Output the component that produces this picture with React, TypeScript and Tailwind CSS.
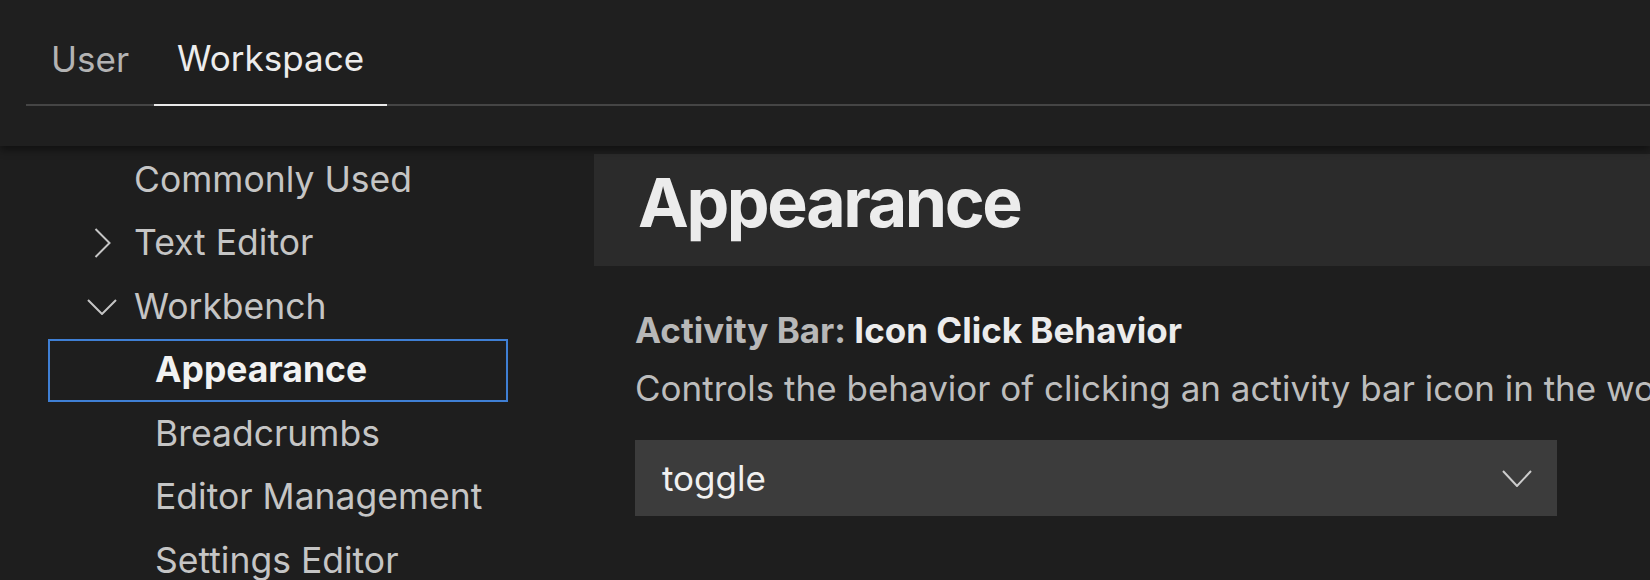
import { ReactNode } from "react";

const font = { fontFamily: "Inter, 'Noto Sans', sans-serif" };

function ChevronRight() {
  return (
    <svg width="17" height="30" viewBox="0 0 17 30" fill="none">
      <polyline points="1.5,1 15.5,15 1.5,29" stroke="#c5c5c5" strokeWidth="2" />
    </svg>
  );
}

function ChevronDown({ w = 30, h = 16, color = "#c5c5c5" }: { w?: number; h?: number; color?: string }) {
  return (
    <svg width={w} height={h} viewBox={`0 0 ${w} ${h}`} fill="none">
      <polyline points={`1,1 ${w / 2},${h - 1} ${w - 1},1`} stroke={color} strokeWidth="2" />
    </svg>
  );
}

function TreeRow({
  children,
  icon,
  child,
  selected,
}: {
  children: ReactNode;
  icon?: ReactNode;
  child?: boolean;
  selected?: boolean;
}) {
  return (
    <div
      className={
        "ml-[48px] flex h-[63.5px] w-[460px] items-center border-2 " +
        (selected ? "border-[#3f7fd4]" : "border-transparent") +
        (child ? " pl-[105px]" : " pl-[37px]")
      }
    >
      {!child && <span className="flex w-[30px] justify-center">{icon}</span>}
      <span
        className={
          "whitespace-nowrap text-[35.5px] leading-[48px] " +
          (child ? "" : "ml-[17px] ") +
          (selected ? "font-bold text-[#f2f2f2]" : "text-[#c5c5c5]")
        }
      >
        {children}
      </span>
    </div>
  );
}

export default function App() {
  return (
    <div className="h-[580px] w-[1650px] overflow-hidden bg-[#1e1e1e]" style={font}>
      <header className="relative z-10 h-[146px] bg-[#1f1f1f] pl-[26px] shadow-[0_4px_8px_rgba(0,0,0,0.45)]">
        <div className="flex border-b-2 border-[#454545] text-[35px] leading-[48px]">
          <div className="px-[25px] pb-[21px] pt-[35px] text-[#b3b3b3]">User</div>
          <div className="-mb-[2px] border-b-2 border-[#e8e8e8] px-[23px] pb-[21px] pt-[34px] text-[#ececec]">
            Workspace
          </div>
        </div>
      </header>

      <div className="flex">
        <nav className="w-[594px] shrink-0 pt-[2px]">
          <TreeRow>Commonly Used</TreeRow>
          <TreeRow icon={<ChevronRight />}>Text Editor</TreeRow>
          <TreeRow icon={<ChevronDown w={30} h={16} />}>Workbench</TreeRow>
          <TreeRow child selected>
            Appearance
          </TreeRow>
          <TreeRow child>Breadcrumbs</TreeRow>
          <TreeRow child>Editor Management</TreeRow>
          <TreeRow child>Settings Editor</TreeRow>
        </nav>

        <main className="min-w-0 flex-1 pt-[8px]">
          <div className="h-[112px] bg-[#2b2b2b] pl-[44px] pt-[7px]">
            <h1 className="text-[68px] font-bold leading-[82px] tracking-[-0.035em] text-[#ececec]">
              Appearance
            </h1>
          </div>

          <section className="pl-[41px] pt-[40px]">
            <div className="whitespace-nowrap text-[35px] font-bold leading-[48px]">
              <span className="text-[#b8b8b8]">Activity Bar: </span>
              <span className="text-[#ececec]">Icon Click Behavior</span>
            </div>
            <p className="mt-[10px] whitespace-nowrap text-[35px] leading-[48px] text-[#bdbdbd]">
              Controls the behavior of clicking an activity bar icon in the workbench.
            </p>
            <div className="mt-[28px] flex h-[76px] w-[922px] items-center justify-between bg-[#3c3c3c] pl-[27px] pr-[25px]">
              <span className="text-[35px] leading-[48px] text-[#f0f0f0]">toggle</span>
              <ChevronDown w={30} h={17} color="#cccccc" />
            </div>
          </section>
        </main>
      </div>
    </div>
  );
}
